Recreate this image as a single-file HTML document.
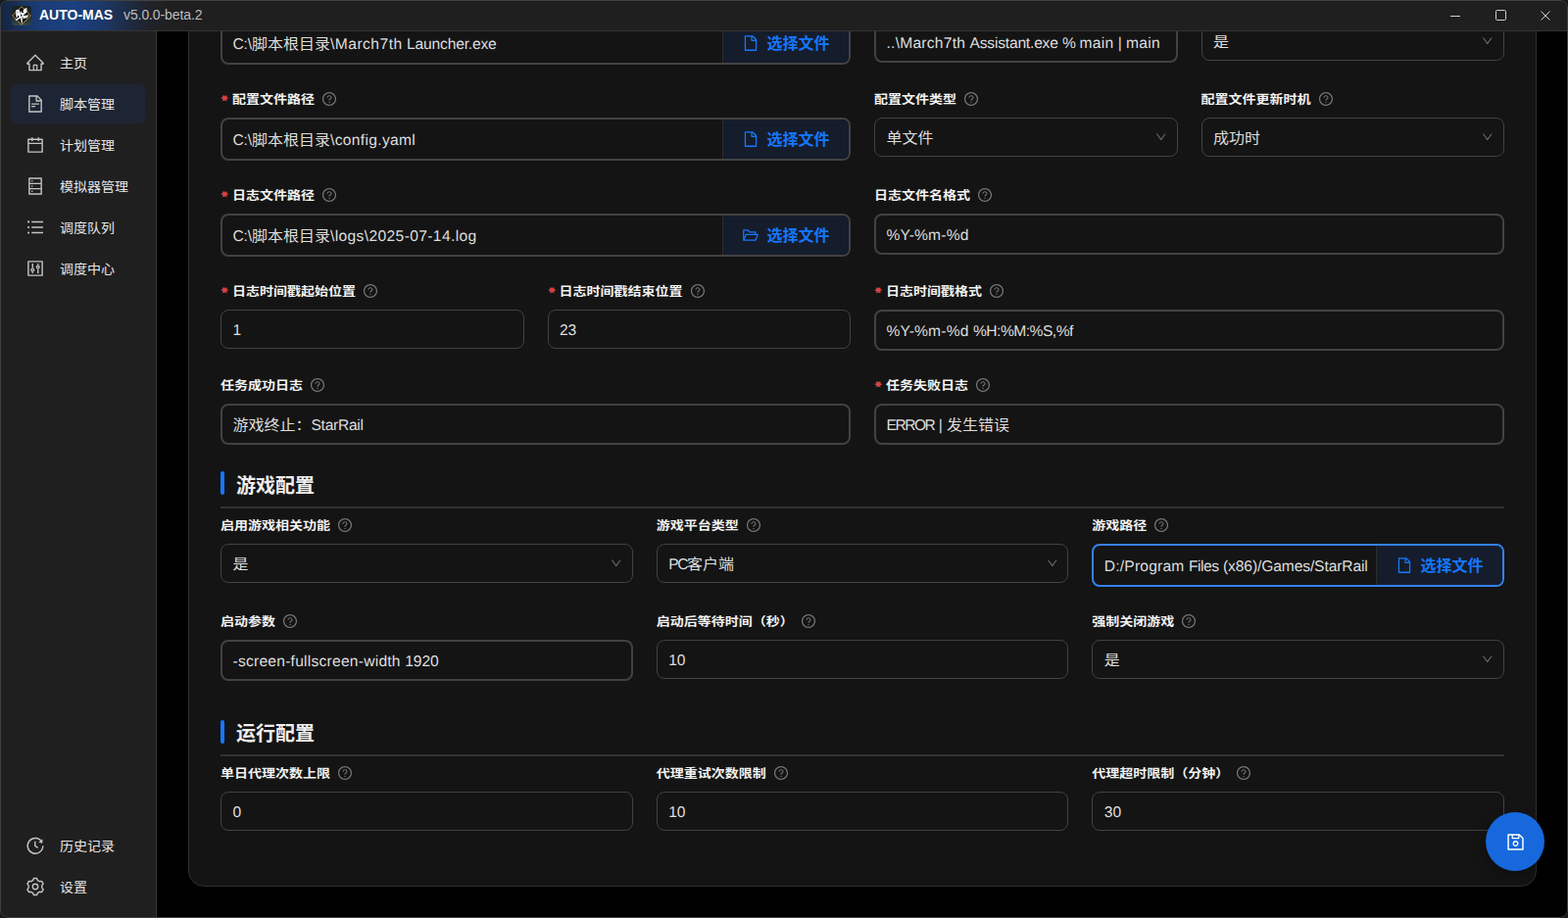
<!DOCTYPE html><html lang="zh-CN"><head><meta charset="utf-8"><title>AUTO-MAS</title><style>
*{box-sizing:border-box;margin:0;padding:0}
html,body{width:1600px;height:937px;overflow:hidden;background:#1b1b1b}
body{font-family:"Liberation Sans","Noto Sans CJK SC",sans-serif;font-size:14px;color:#e0e0e0;position:relative}
#win{position:absolute;left:0;top:0;width:1600px;height:937px;border-radius:8px;overflow:hidden;background:#000}
#frame{position:absolute;left:0;top:0;width:1600px;height:937px;border:1px solid #414141;border-radius:8px;z-index:50;pointer-events:none}
#tb{position:absolute;left:0;top:0;width:1600px;height:32px;background:#1f1f1f;border-bottom:1px solid #333;z-index:20}
#tb .grad{position:absolute;left:0;top:0;width:260px;height:31px;background:linear-gradient(90deg,#15233c 0px,#17294a 9px,#193564 24px,#1b3c76 42px,#1c4180 72px,#1c3a6e 100px,#1e2e4c 125px,#1f2329 152px,#1f1f1f 176px)}
#logo{position:absolute;left:12px;top:6px;width:20px;height:20px}
#tb .t1{position:absolute;left:40px;top:-1px;height:32px;line-height:32px;font-weight:700;font-size:14px;color:#fff;white-space:nowrap}
#tb .t2{position:absolute;left:126px;top:-1px;height:32px;line-height:32px;font-size:14px;letter-spacing:-0.1px;color:#bdbdbd;white-space:nowrap}
#tb .wc{position:absolute;top:0;height:32px}
#sb{position:absolute;left:0;top:32px;width:160px;height:905px;background:#1f1f1f;border-right:1px solid #393939;z-index:10}
.mi{position:absolute;left:11px;width:137px;height:40px;border-radius:6px;color:#e6e6e6;font-size:14px;line-height:40px;white-space:nowrap}
.mi.sel{background:#1d2534}
.mi .i{position:absolute;left:15px;top:10px;color:#c4c4c4}
.mi>span.t{position:absolute;left:50px;top:0}
#card{position:absolute;left:192px;top:-40px;width:1376px;height:945px;background:#141414;border:1px solid #303030;border-radius:0 0 16px 16px;z-index:1}
.c{display:inline-block;transform:translateY(.04em) scaleY(.91);transform-origin:50% 56%}
.l{font-size:.975em;text-rendering:geometricPrecision}
.lb .c{transform:translateY(.01em) scaleY(.865)}
.sec .c{transform:none}
.btn .c{transform:translateY(.021em) scaleY(.965)}
.lb{position:absolute;height:22px;line-height:22px;font-size:14px;font-weight:700;color:#f2f2f2;white-space:nowrap}
.lb .req{color:#dc4446;font-weight:700;font-family:"DejaVu Sans",sans-serif;font-size:13px;line-height:22px;margin-right:4px;display:inline-block;width:8px;height:22px;vertical-align:top;position:relative;top:0.7px;left:-0.7px;transform:rotate(90deg) scaleX(.8);transform-origin:3.4px 10.2px;-webkit-text-stroke:0.7px #dc4446}
.lb .i{color:#7a7a7a;vertical-align:-3px;margin-left:8px;position:relative;left:-1px}
.ctl{position:absolute;border:1px solid #424242;border-radius:8px;background:#141414;color:#dedede;font-size:16px;white-space:nowrap;overflow:hidden}
.ctl .v{position:absolute;left:11px;top:2px;white-space:pre}
.ctl.t2{border-width:2px}
.ctl.focus{border-color:#3481f0;border-width:2px}
.ctl .btn{position:absolute;right:0;top:0;bottom:0;width:129px;background:#151d2c;border-left:1px solid #2c2c2c;color:#1677ff;font-weight:700;font-size:16px}
.ctl .btn .i{position:absolute;left:19px;top:11px}
.ctl .btn>span.t{position:absolute;left:44.5px;top:1px}
.ctl .dn{position:absolute;right:10px;color:#6e6e6e}
.sec{position:absolute;left:225px;width:1310px;height:38px;border-bottom:2px solid #333}
.sec i{position:absolute;left:0;top:0;width:4px;height:24px;border-radius:2px;background:#1677ff}
.sec b{position:absolute;left:16px;top:0;font-size:20px;line-height:26px;color:#efefef;font-weight:700;white-space:nowrap}
#fab{position:absolute;left:1516px;top:829px;width:60px;height:60px;border-radius:50%;background:#1668dc;z-index:30;color:#fff;box-shadow:0 6px 16px rgba(0,0,0,.3)}
#fab .i{position:absolute;left:19.5px;top:19.5px}
</style></head><body>
<div id="win">
<div id="tb"><div class="grad"></div>
<svg id="logo" viewBox="0 0 20 20"><defs><linearGradient id="lg" x1="0" y1="0" x2="0" y2="1"><stop offset="0" stop-color="#182022"/><stop offset=".55" stop-color="#1f2a2b"/><stop offset="1" stop-color="#314a4c"/></linearGradient></defs><rect width="20" height="20" rx="3.6" fill="url(#lg)"/><path d="M10 .7L19.3 10 10 19.3.7 10z" fill="#0e1011" stroke="#bd9c4b" stroke-width=".95"/><g fill="#fbfbfb"><path d="M4 4.8Q5.6 3 7.6 4L8.9 7.4 9.2 11.6 7.5 12.2 7 9.7 5.9 9.9 5.7 12.1 4.4 11.4z"/><path d="M12.6 3L15.3 1.9 15.6 6 14 7.7 12.2 7.2 11.6 5.2z"/><path d="M9 5.2L11.2 7.6 13.4 5.6 14 7.6 11.4 10.3 9.2 8.4z"/><path d="M11.2 10.2L17.5 9.3 15.6 12.3 11.6 12.9z"/><path d="M3.5 13.7L11.4 9.8 12 11 4.6 15z"/><path d="M9 12.6L10.8 12 10.8 17.5 9.9 17.8z"/></g><circle cx="5.9" cy="6.7" r=".7" fill="#8a8a8a"/><circle cx="14.6" cy="10.8" r=".5" fill="#9a9a9a"/></svg>
<div class="t1">AUTO-MAS</div><div class="t2">v5.0.0-beta.2</div>
<svg class="wc" style="left:1462px" width="138" height="32" viewBox="0 0 138 32" fill="none" stroke="#d0d0d0" stroke-width="1"><path d="M18 16.5h10"/><rect x="64.5" y="10.5" width="10" height="10" rx="1.2"/><path d="M110.5 11.5l9 9M119.5 11.5l-9 9"/></svg>
</div>
<div id="sb">
<div class="mi" style="top:12px"><svg class="i" viewBox="0 0 1024 1024" width="20" height="20" fill="currentColor" style=""><path d="M946.5 505L560.1 118.8l-25.9-25.9a31.5 31.5 0 00-44.4 0L77.5 505a63.9 63.9 0 00-18.8 46c.4 35.2 29.7 63.3 64.9 63.3h42.5V940h691.8V614.3h43.4c17.1 0 33.2-6.7 45.3-18.8a63.6 63.6 0 0018.7-45.3c0-17-6.7-33.1-18.8-45.2zM568 868H456V664h112v204zm217.9-325.7V868H632V640c0-22.1-17.9-40-40-40H432c-22.1 0-40 17.9-40 40v228H238.1V542.3h-96l370-369.7 23.1 23.1L882 542.3h-96.1z"/></svg><span class="t"><span class="c">主页</span></span></div>
<div class="mi sel" style="top:54px"><svg class="i" viewBox="0 0 1024 1024" width="20" height="20" fill="currentColor" style=""><path d="M854.6 288.6L639.4 73.4c-6-6-14.1-9.4-22.6-9.4H192c-17.7 0-32 14.3-32 32v832c0 17.7 14.3 32 32 32h640c17.7 0 32-14.3 32-32V311.3c0-8.5-3.4-16.7-9.4-22.7zM790.2 326H602V137.8L790.2 326zm1.8 562H232V136h302v216a42 42 0 0042 42h216v494zM504 618H320c-4.4 0-8 3.6-8 8v48c0 4.4 3.6 8 8 8h184c4.4 0 8-3.6 8-8v-48c0-4.4-3.6-8-8-8zM312 490v48c0 4.4 3.6 8 8 8h384c4.4 0 8-3.6 8-8v-48c0-4.4-3.6-8-8-8H320c-4.4 0-8 3.6-8 8z"/></svg><span class="t"><span class="c">脚本管理</span></span></div>
<div class="mi" style="top:96px"><svg class="i" viewBox="0 0 1024 1024" width="20" height="20" fill="currentColor" style=""><path d="M880 184H712v-64c0-4.4-3.6-8-8-8h-56c-4.4 0-8 3.6-8 8v64H384v-64c0-4.4-3.6-8-8-8h-56c-4.4 0-8 3.6-8 8v64H144c-17.7 0-32 14.3-32 32v664c0 17.7 14.3 32 32 32h736c17.7 0 32-14.3 32-32V216c0-17.7-14.3-32-32-32zm-40 656H184V460h656v380zM184 392V256h128v48c0 4.4 3.6 8 8 8h56c4.4 0 8-3.6 8-8v-48h256v48c0 4.4 3.6 8 8 8h56c4.4 0 8-3.6 8-8v-48h128v136H184z"/></svg><span class="t"><span class="c">计划管理</span></span></div>
<div class="mi" style="top:138px"><svg class="i" viewBox="0 0 1024 1024" width="20" height="20" fill="currentColor" style=""><path d="M832 64H192c-17.7 0-32 14.3-32 32v832c0 17.7 14.3 32 32 32h640c17.7 0 32-14.3 32-32V96c0-17.7-14.3-32-32-32zm-600 72h560v208H232V136zm560 480H232V408h560v208zm0 272H232V680h560v208zM304 240a40 40 0 1080 0 40 40 0 10-80 0zm0 272a40 40 0 1080 0 40 40 0 10-80 0zm0 272a40 40 0 1080 0 40 40 0 10-80 0z"/></svg><span class="t"><span class="c">模拟器管理</span></span></div>
<div class="mi" style="top:180px"><svg class="i" viewBox="0 0 1024 1024" width="20" height="20" fill="currentColor" style=""><path d="M912 192H328c-4.4 0-8 3.6-8 8v56c0 4.4 3.6 8 8 8h584c4.4 0 8-3.6 8-8v-56c0-4.4-3.6-8-8-8zm0 284H328c-4.4 0-8 3.6-8 8v56c0 4.4 3.6 8 8 8h584c4.4 0 8-3.6 8-8v-56c0-4.4-3.6-8-8-8zm0 284H328c-4.4 0-8 3.6-8 8v56c0 4.4 3.6 8 8 8h584c4.4 0 8-3.6 8-8v-56c0-4.4-3.6-8-8-8zM104 228a56 56 0 10112 0 56 56 0 10-112 0zm0 284a56 56 0 10112 0 56 56 0 10-112 0zm0 284a56 56 0 10112 0 56 56 0 10-112 0z"/></svg><span class="t"><span class="c">调度队列</span></span></div>
<div class="mi" style="top:222px"><svg class="i" viewBox="0 0 1024 1024" width="20" height="20" fill="currentColor" style=""><g fill="none" stroke="currentColor" stroke-width="72"><rect x="148" y="148" width="728" height="728" rx="8"/><path d="M372 256v230M372 690v78M652 256v78M652 538v230"/><circle cx="372" cy="588" r="70"/><circle cx="652" cy="436" r="70"/></g></svg><span class="t"><span class="c">调度中心</span></span></div>
<div class="mi" style="top:811px"><svg class="i" viewBox="0 0 1024 1024" width="20" height="20" fill="currentColor" style=""><g fill="none" stroke="currentColor" stroke-width="72" stroke-linecap="butt"><path d="M852 320A400 400 0 1 0 912 530"/><path d="M500 300v232l150 100" stroke-linejoin="miter"/></g><path d="M900 180L880 400 680 340z"/></svg><span class="t"><span class="c">历史记录</span></span></div>
<div class="mi" style="top:853px"><svg class="i" viewBox="0 0 1024 1024" width="20" height="20" fill="currentColor" style=""><g fill="none" stroke="currentColor" stroke-width="72" stroke-linejoin="round"><path d="M429.6 79.8 L594.4 79.8 L637.4 185.2 L732.3 240.0 L845.1 224.5 L927.5 367.3 L857.7 457.2 L857.7 566.8 L927.5 656.7 L845.1 799.5 L732.3 784.0 L637.4 838.8 L594.4 944.2 L429.6 944.2 L386.6 838.8 L291.7 784.0 L178.9 799.5 L96.5 656.7 L166.3 566.8 L166.3 457.2 L96.5 367.3 L178.9 224.5 L291.7 240.0 L386.6 185.2Z"/><circle cx="512" cy="512" r="140"/></g></svg><span class="t"><span class="c">设置</span></span></div>
</div>
<div id="card"></div>
<div id="content" style="position:absolute;left:0;top:0;z-index:2">
<div class="ctl t2" style="left:225px;top:22px;width:643px;height:44px;line-height:40px"><span class="v" style="left:10.5px;top:1.3px"><span class="l" style="letter-spacing:-0.16px">C:\</span><span class="c">脚本根目录</span><span class="l" style="letter-spacing:0.48px;word-spacing:-0.43px">\March7th </span><span class="l" style="letter-spacing:-0.17px">Launcher.exe</span></span><div class="btn"><svg class="i" viewBox="0 0 1024 1024" width="18" height="18" fill="currentColor" style="top:11px"><path d="M854.6 288.6L639.4 73.4c-6-6-14.1-9.4-22.6-9.4H192c-17.7 0-32 14.3-32 32v832c0 17.7 14.3 32 32 32h640c17.7 0 32-14.3 32-32V311.3c0-8.5-3.4-16.7-9.4-22.7zM790.2 326H602V137.8L790.2 326zm1.8 562H232V136h302v216a42 42 0 0042 42h216v494z"/></svg><span class="t"><span class="c">选择文件</span></span></div></div>
<div class="ctl t2" style="left:892px;top:22px;width:309.5px;height:42px;line-height:38px"><span class="v" style="left:10.5px;top:1.3px"><span class="l" style="letter-spacing:0.24px;word-spacing:-0.19px">..\March7th </span><span class="l" style="letter-spacing:-0.20px;word-spacing:0.25px">Assistant.exe </span><span class="l" style="letter-spacing:-0.78px;word-spacing:0.83px">% </span><span class="l" style="letter-spacing:0.26px;word-spacing:-0.21px">main </span><span class="l" style="letter-spacing:-0.22px;word-spacing:0.27px">| </span><span class="l" style="letter-spacing:0.26px">main</span></span></div>
<div class="ctl" style="left:1225.5px;top:22px;width:309.5px;height:40px;line-height:38px"><span class="v" style="left:11.5px;top:1.3px"><span class="c">是</span></span><svg class="i dn" viewBox="0 0 1024 1024" width="13.5" height="13.5" fill="currentColor" style="position:absolute;right:9.25px;top:12.35px;color:#6a6a6a"><path d="M884 256h-75c-5.1 0-9.9 2.5-12.9 6.6L512 654.2 227.9 262.6c-3-4.1-7.8-6.6-12.9-6.6h-75c-6.5 0-10.3 7.4-6.5 12.7l352.6 486.1c12.8 17.6 39 17.6 51.7 0l352.6-486.1c3.9-5.3.1-12.7-6.4-12.7z"/></svg></div>
<div class="lb" style="left:225px;top:89.5px"><span class="req">*</span><span class="c">配置文件路径</span><svg class="i" viewBox="0 0 1024 1024" width="16" height="16" fill="currentColor" style="margin-left:8px"><path d="M512 64C264.6 64 64 264.6 64 512s200.6 448 448 448 448-200.6 448-448S759.4 64 512 64zm0 820c-205.4 0-372-166.6-372-372s166.6-372 372-372 372 166.6 372 372-166.6 372-372 372z"/><path d="M623.6 316.7C593.6 290.4 554 276 512 276s-81.6 14.5-111.6 40.7C369.2 344 352 380.7 352 420v7.6c0 4.4 3.6 8 8 8h48c4.4 0 8-3.6 8-8V420c0-44.1 43.1-80 96-80s96 35.9 96 80c0 31.1-22 59.6-56.1 72.7-21.2 8.1-39.2 22.3-52.1 40.9-13.1 19-19.9 41.8-19.9 64.9V620c0 4.4 3.6 8 8 8h48c4.4 0 8-3.6 8-8v-22.7a48.3 48.3 0 0130.9-44.8c59-22.7 97.1-74.7 97.1-132.5.1-39.3-17.1-76-48.3-103.3zM472 732a40 40 0 1080 0 40 40 0 10-80 0z"/></svg></div>
<div class="lb" style="left:892px;top:89.5px"><span class="c">配置文件类型</span><svg class="i" viewBox="0 0 1024 1024" width="16" height="16" fill="currentColor" style="margin-left:8px"><path d="M512 64C264.6 64 64 264.6 64 512s200.6 448 448 448 448-200.6 448-448S759.4 64 512 64zm0 820c-205.4 0-372-166.6-372-372s166.6-372 372-372 372 166.6 372 372-166.6 372-372 372z"/><path d="M623.6 316.7C593.6 290.4 554 276 512 276s-81.6 14.5-111.6 40.7C369.2 344 352 380.7 352 420v7.6c0 4.4 3.6 8 8 8h48c4.4 0 8-3.6 8-8V420c0-44.1 43.1-80 96-80s96 35.9 96 80c0 31.1-22 59.6-56.1 72.7-21.2 8.1-39.2 22.3-52.1 40.9-13.1 19-19.9 41.8-19.9 64.9V620c0 4.4 3.6 8 8 8h48c4.4 0 8-3.6 8-8v-22.7a48.3 48.3 0 0130.9-44.8c59-22.7 97.1-74.7 97.1-132.5.1-39.3-17.1-76-48.3-103.3zM472 732a40 40 0 1080 0 40 40 0 10-80 0z"/></svg></div>
<div class="lb" style="left:1225.5px;top:89.5px"><span class="c">配置文件更新时机</span><svg class="i" viewBox="0 0 1024 1024" width="16" height="16" fill="currentColor" style="margin-left:8px"><path d="M512 64C264.6 64 64 264.6 64 512s200.6 448 448 448 448-200.6 448-448S759.4 64 512 64zm0 820c-205.4 0-372-166.6-372-372s166.6-372 372-372 372 166.6 372 372-166.6 372-372 372z"/><path d="M623.6 316.7C593.6 290.4 554 276 512 276s-81.6 14.5-111.6 40.7C369.2 344 352 380.7 352 420v7.6c0 4.4 3.6 8 8 8h48c4.4 0 8-3.6 8-8V420c0-44.1 43.1-80 96-80s96 35.9 96 80c0 31.1-22 59.6-56.1 72.7-21.2 8.1-39.2 22.3-52.1 40.9-13.1 19-19.9 41.8-19.9 64.9V620c0 4.4 3.6 8 8 8h48c4.4 0 8-3.6 8-8v-22.7a48.3 48.3 0 0130.9-44.8c59-22.7 97.1-74.7 97.1-132.5.1-39.3-17.1-76-48.3-103.3zM472 732a40 40 0 1080 0 40 40 0 10-80 0z"/></svg></div>
<div class="ctl t2" style="left:225px;top:120px;width:643px;height:44px;line-height:40px"><span class="v" style="left:10.5px;top:1.3px"><span class="l" style="letter-spacing:-0.16px">C:\</span><span class="c">脚本根目录</span><span class="l" style="letter-spacing:0.33px">\config.yaml</span></span><div class="btn"><svg class="i" viewBox="0 0 1024 1024" width="18" height="18" fill="currentColor" style="top:11px"><path d="M854.6 288.6L639.4 73.4c-6-6-14.1-9.4-22.6-9.4H192c-17.7 0-32 14.3-32 32v832c0 17.7 14.3 32 32 32h640c17.7 0 32-14.3 32-32V311.3c0-8.5-3.4-16.7-9.4-22.7zM790.2 326H602V137.8L790.2 326zm1.8 562H232V136h302v216a42 42 0 0042 42h216v494z"/></svg><span class="t"><span class="c">选择文件</span></span></div></div>
<div class="ctl" style="left:892px;top:120px;width:309.5px;height:40px;line-height:38px"><span class="v" style="left:11.5px;top:1.3px"><span class="c">单文件</span></span><svg class="i dn" viewBox="0 0 1024 1024" width="13.5" height="13.5" fill="currentColor" style="position:absolute;right:9.25px;top:12.35px;color:#6a6a6a"><path d="M884 256h-75c-5.1 0-9.9 2.5-12.9 6.6L512 654.2 227.9 262.6c-3-4.1-7.8-6.6-12.9-6.6h-75c-6.5 0-10.3 7.4-6.5 12.7l352.6 486.1c12.8 17.6 39 17.6 51.7 0l352.6-486.1c3.9-5.3.1-12.7-6.4-12.7z"/></svg></div>
<div class="ctl" style="left:1225.5px;top:120px;width:309.5px;height:40px;line-height:38px"><span class="v" style="left:11.5px;top:1.3px"><span class="c">成功时</span></span><svg class="i dn" viewBox="0 0 1024 1024" width="13.5" height="13.5" fill="currentColor" style="position:absolute;right:9.25px;top:12.35px;color:#6a6a6a"><path d="M884 256h-75c-5.1 0-9.9 2.5-12.9 6.6L512 654.2 227.9 262.6c-3-4.1-7.8-6.6-12.9-6.6h-75c-6.5 0-10.3 7.4-6.5 12.7l352.6 486.1c12.8 17.6 39 17.6 51.7 0l352.6-486.1c3.9-5.3.1-12.7-6.4-12.7z"/></svg></div>
<div class="lb" style="left:225px;top:187.5px"><span class="req">*</span><span class="c">日志文件路径</span><svg class="i" viewBox="0 0 1024 1024" width="16" height="16" fill="currentColor" style="margin-left:8px"><path d="M512 64C264.6 64 64 264.6 64 512s200.6 448 448 448 448-200.6 448-448S759.4 64 512 64zm0 820c-205.4 0-372-166.6-372-372s166.6-372 372-372 372 166.6 372 372-166.6 372-372 372z"/><path d="M623.6 316.7C593.6 290.4 554 276 512 276s-81.6 14.5-111.6 40.7C369.2 344 352 380.7 352 420v7.6c0 4.4 3.6 8 8 8h48c4.4 0 8-3.6 8-8V420c0-44.1 43.1-80 96-80s96 35.9 96 80c0 31.1-22 59.6-56.1 72.7-21.2 8.1-39.2 22.3-52.1 40.9-13.1 19-19.9 41.8-19.9 64.9V620c0 4.4 3.6 8 8 8h48c4.4 0 8-3.6 8-8v-22.7a48.3 48.3 0 0130.9-44.8c59-22.7 97.1-74.7 97.1-132.5.1-39.3-17.1-76-48.3-103.3zM472 732a40 40 0 1080 0 40 40 0 10-80 0z"/></svg></div>
<div class="lb" style="left:892px;top:187.5px"><span class="c">日志文件名格式</span><svg class="i" viewBox="0 0 1024 1024" width="16" height="16" fill="currentColor" style="margin-left:8px"><path d="M512 64C264.6 64 64 264.6 64 512s200.6 448 448 448 448-200.6 448-448S759.4 64 512 64zm0 820c-205.4 0-372-166.6-372-372s166.6-372 372-372 372 166.6 372 372-166.6 372-372 372z"/><path d="M623.6 316.7C593.6 290.4 554 276 512 276s-81.6 14.5-111.6 40.7C369.2 344 352 380.7 352 420v7.6c0 4.4 3.6 8 8 8h48c4.4 0 8-3.6 8-8V420c0-44.1 43.1-80 96-80s96 35.9 96 80c0 31.1-22 59.6-56.1 72.7-21.2 8.1-39.2 22.3-52.1 40.9-13.1 19-19.9 41.8-19.9 64.9V620c0 4.4 3.6 8 8 8h48c4.4 0 8-3.6 8-8v-22.7a48.3 48.3 0 0130.9-44.8c59-22.7 97.1-74.7 97.1-132.5.1-39.3-17.1-76-48.3-103.3zM472 732a40 40 0 1080 0 40 40 0 10-80 0z"/></svg></div>
<div class="ctl t2" style="left:225px;top:218px;width:643px;height:44px;line-height:40px"><span class="v" style="left:10.5px;top:1.3px"><span class="l" style="letter-spacing:-0.16px">C:\</span><span class="c">脚本根目录</span><span class="l" style="letter-spacing:0.37px">\logs\2025-07-14.log</span></span><div class="btn"><svg class="i" viewBox="0 0 1024 1024" width="18" height="18" fill="currentColor" style="top:11px"><path d="M928 444H820V330.4c0-17.7-14.3-32-32-32H473L355.7 186.2a8.15 8.15 0 00-5.5-2.2H96c-17.7 0-32 14.3-32 32v592c0 17.7 14.3 32 32 32h698c13 0 24.8-7.9 29.7-20l134-332c1.5-3.8 2.3-7.9 2.3-12 0-17.7-14.3-32-32-32zM136 256h188.5l119.6 114.4H748V444H238c-13 0-24.8 7.9-29.7 20L136 643.2V256zm635.3 512H159l103.3-256h612.4L771.3 768z"/></svg><span class="t"><span class="c">选择文件</span></span></div></div>
<div class="ctl t2" style="left:892px;top:218px;width:643px;height:42px;line-height:38px"><span class="v" style="left:10.5px;top:1.3px"><span class="l" style="letter-spacing:0.18px">%Y-%m-%d</span></span></div>
<div class="lb" style="left:225px;top:285.5px"><span class="req">*</span><span class="c">日志时间戳起始位置</span><svg class="i" viewBox="0 0 1024 1024" width="16" height="16" fill="currentColor" style="margin-left:8px"><path d="M512 64C264.6 64 64 264.6 64 512s200.6 448 448 448 448-200.6 448-448S759.4 64 512 64zm0 820c-205.4 0-372-166.6-372-372s166.6-372 372-372 372 166.6 372 372-166.6 372-372 372z"/><path d="M623.6 316.7C593.6 290.4 554 276 512 276s-81.6 14.5-111.6 40.7C369.2 344 352 380.7 352 420v7.6c0 4.4 3.6 8 8 8h48c4.4 0 8-3.6 8-8V420c0-44.1 43.1-80 96-80s96 35.9 96 80c0 31.1-22 59.6-56.1 72.7-21.2 8.1-39.2 22.3-52.1 40.9-13.1 19-19.9 41.8-19.9 64.9V620c0 4.4 3.6 8 8 8h48c4.4 0 8-3.6 8-8v-22.7a48.3 48.3 0 0130.9-44.8c59-22.7 97.1-74.7 97.1-132.5.1-39.3-17.1-76-48.3-103.3zM472 732a40 40 0 1080 0 40 40 0 10-80 0z"/></svg></div>
<div class="lb" style="left:558.5px;top:285.5px"><span class="req">*</span><span class="c">日志时间戳结束位置</span><svg class="i" viewBox="0 0 1024 1024" width="16" height="16" fill="currentColor" style="margin-left:8px"><path d="M512 64C264.6 64 64 264.6 64 512s200.6 448 448 448 448-200.6 448-448S759.4 64 512 64zm0 820c-205.4 0-372-166.6-372-372s166.6-372 372-372 372 166.6 372 372-166.6 372-372 372z"/><path d="M623.6 316.7C593.6 290.4 554 276 512 276s-81.6 14.5-111.6 40.7C369.2 344 352 380.7 352 420v7.6c0 4.4 3.6 8 8 8h48c4.4 0 8-3.6 8-8V420c0-44.1 43.1-80 96-80s96 35.9 96 80c0 31.1-22 59.6-56.1 72.7-21.2 8.1-39.2 22.3-52.1 40.9-13.1 19-19.9 41.8-19.9 64.9V620c0 4.4 3.6 8 8 8h48c4.4 0 8-3.6 8-8v-22.7a48.3 48.3 0 0130.9-44.8c59-22.7 97.1-74.7 97.1-132.5.1-39.3-17.1-76-48.3-103.3zM472 732a40 40 0 1080 0 40 40 0 10-80 0z"/></svg></div>
<div class="lb" style="left:892px;top:285.5px"><span class="req">*</span><span class="c">日志时间戳格式</span><svg class="i" viewBox="0 0 1024 1024" width="16" height="16" fill="currentColor" style="margin-left:8px"><path d="M512 64C264.6 64 64 264.6 64 512s200.6 448 448 448 448-200.6 448-448S759.4 64 512 64zm0 820c-205.4 0-372-166.6-372-372s166.6-372 372-372 372 166.6 372 372-166.6 372-372 372z"/><path d="M623.6 316.7C593.6 290.4 554 276 512 276s-81.6 14.5-111.6 40.7C369.2 344 352 380.7 352 420v7.6c0 4.4 3.6 8 8 8h48c4.4 0 8-3.6 8-8V420c0-44.1 43.1-80 96-80s96 35.9 96 80c0 31.1-22 59.6-56.1 72.7-21.2 8.1-39.2 22.3-52.1 40.9-13.1 19-19.9 41.8-19.9 64.9V620c0 4.4 3.6 8 8 8h48c4.4 0 8-3.6 8-8v-22.7a48.3 48.3 0 0130.9-44.8c59-22.7 97.1-74.7 97.1-132.5.1-39.3-17.1-76-48.3-103.3zM472 732a40 40 0 1080 0 40 40 0 10-80 0z"/></svg></div>
<div class="ctl" style="left:225px;top:316px;width:309.5px;height:40px;line-height:38px"><span class="v" style="left:11.5px;top:1.3px"><span class="l" style="letter-spacing:-0.05px">1</span></span></div>
<div class="ctl" style="left:558.5px;top:316px;width:309.5px;height:40px;line-height:38px"><span class="v" style="left:11.5px;top:1.3px"><span class="l" style="letter-spacing:-0.05px">23</span></span></div>
<div class="ctl t2" style="left:892px;top:316px;width:643px;height:42px;line-height:38px"><span class="v" style="left:10.5px;top:1.3px"><span class="l" style="letter-spacing:0.18px;word-spacing:-0.13px">%Y-%m-%d </span><span class="l" style="letter-spacing:-0.50px">%H:%M:%S,%f</span></span></div>
<div class="lb" style="left:225px;top:381.5px"><span class="c">任务成功日志</span><svg class="i" viewBox="0 0 1024 1024" width="16" height="16" fill="currentColor" style="margin-left:8px"><path d="M512 64C264.6 64 64 264.6 64 512s200.6 448 448 448 448-200.6 448-448S759.4 64 512 64zm0 820c-205.4 0-372-166.6-372-372s166.6-372 372-372 372 166.6 372 372-166.6 372-372 372z"/><path d="M623.6 316.7C593.6 290.4 554 276 512 276s-81.6 14.5-111.6 40.7C369.2 344 352 380.7 352 420v7.6c0 4.4 3.6 8 8 8h48c4.4 0 8-3.6 8-8V420c0-44.1 43.1-80 96-80s96 35.9 96 80c0 31.1-22 59.6-56.1 72.7-21.2 8.1-39.2 22.3-52.1 40.9-13.1 19-19.9 41.8-19.9 64.9V620c0 4.4 3.6 8 8 8h48c4.4 0 8-3.6 8-8v-22.7a48.3 48.3 0 0130.9-44.8c59-22.7 97.1-74.7 97.1-132.5.1-39.3-17.1-76-48.3-103.3zM472 732a40 40 0 1080 0 40 40 0 10-80 0z"/></svg></div>
<div class="lb" style="left:892px;top:381.5px"><span class="req">*</span><span class="c">任务失败日志</span><svg class="i" viewBox="0 0 1024 1024" width="16" height="16" fill="currentColor" style="margin-left:8px"><path d="M512 64C264.6 64 64 264.6 64 512s200.6 448 448 448 448-200.6 448-448S759.4 64 512 64zm0 820c-205.4 0-372-166.6-372-372s166.6-372 372-372 372 166.6 372 372-166.6 372-372 372z"/><path d="M623.6 316.7C593.6 290.4 554 276 512 276s-81.6 14.5-111.6 40.7C369.2 344 352 380.7 352 420v7.6c0 4.4 3.6 8 8 8h48c4.4 0 8-3.6 8-8V420c0-44.1 43.1-80 96-80s96 35.9 96 80c0 31.1-22 59.6-56.1 72.7-21.2 8.1-39.2 22.3-52.1 40.9-13.1 19-19.9 41.8-19.9 64.9V620c0 4.4 3.6 8 8 8h48c4.4 0 8-3.6 8-8v-22.7a48.3 48.3 0 0130.9-44.8c59-22.7 97.1-74.7 97.1-132.5.1-39.3-17.1-76-48.3-103.3zM472 732a40 40 0 1080 0 40 40 0 10-80 0z"/></svg></div>
<div class="ctl t2" style="left:225px;top:412px;width:643px;height:42px;line-height:38px"><span class="v" style="left:10.5px;top:1.3px"><span class="c">游戏终止：</span><span class="l" style="letter-spacing:-0.30px">StarRail</span></span></div>
<div class="ctl t2" style="left:892px;top:412px;width:643px;height:42px;line-height:38px"><span class="v" style="left:10.5px;top:1.3px"><span class="l" style="letter-spacing:-1.49px;word-spacing:1.54px">ERROR </span><span class="l" style="letter-spacing:-0.22px;word-spacing:0.27px">| </span><span class="c">发生错误</span></span></div>
<div class="sec" style="top:481px;height:38px"><i></i><b style="top:2px"><span class="c">游戏配置</span></b></div>
<div class="lb" style="left:225px;top:524.5px"><span class="c">启用游戏相关功能</span><svg class="i" viewBox="0 0 1024 1024" width="16" height="16" fill="currentColor" style="margin-left:8px"><path d="M512 64C264.6 64 64 264.6 64 512s200.6 448 448 448 448-200.6 448-448S759.4 64 512 64zm0 820c-205.4 0-372-166.6-372-372s166.6-372 372-372 372 166.6 372 372-166.6 372-372 372z"/><path d="M623.6 316.7C593.6 290.4 554 276 512 276s-81.6 14.5-111.6 40.7C369.2 344 352 380.7 352 420v7.6c0 4.4 3.6 8 8 8h48c4.4 0 8-3.6 8-8V420c0-44.1 43.1-80 96-80s96 35.9 96 80c0 31.1-22 59.6-56.1 72.7-21.2 8.1-39.2 22.3-52.1 40.9-13.1 19-19.9 41.8-19.9 64.9V620c0 4.4 3.6 8 8 8h48c4.4 0 8-3.6 8-8v-22.7a48.3 48.3 0 0130.9-44.8c59-22.7 97.1-74.7 97.1-132.5.1-39.3-17.1-76-48.3-103.3zM472 732a40 40 0 1080 0 40 40 0 10-80 0z"/></svg></div>
<div class="lb" style="left:669.67px;top:524.5px"><span class="c">游戏平台类型</span><svg class="i" viewBox="0 0 1024 1024" width="16" height="16" fill="currentColor" style="margin-left:8px"><path d="M512 64C264.6 64 64 264.6 64 512s200.6 448 448 448 448-200.6 448-448S759.4 64 512 64zm0 820c-205.4 0-372-166.6-372-372s166.6-372 372-372 372 166.6 372 372-166.6 372-372 372z"/><path d="M623.6 316.7C593.6 290.4 554 276 512 276s-81.6 14.5-111.6 40.7C369.2 344 352 380.7 352 420v7.6c0 4.4 3.6 8 8 8h48c4.4 0 8-3.6 8-8V420c0-44.1 43.1-80 96-80s96 35.9 96 80c0 31.1-22 59.6-56.1 72.7-21.2 8.1-39.2 22.3-52.1 40.9-13.1 19-19.9 41.8-19.9 64.9V620c0 4.4 3.6 8 8 8h48c4.4 0 8-3.6 8-8v-22.7a48.3 48.3 0 0130.9-44.8c59-22.7 97.1-74.7 97.1-132.5.1-39.3-17.1-76-48.3-103.3zM472 732a40 40 0 1080 0 40 40 0 10-80 0z"/></svg></div>
<div class="lb" style="left:1114.33px;top:524.5px"><span class="c">游戏路径</span><svg class="i" viewBox="0 0 1024 1024" width="16" height="16" fill="currentColor" style="margin-left:8px"><path d="M512 64C264.6 64 64 264.6 64 512s200.6 448 448 448 448-200.6 448-448S759.4 64 512 64zm0 820c-205.4 0-372-166.6-372-372s166.6-372 372-372 372 166.6 372 372-166.6 372-372 372z"/><path d="M623.6 316.7C593.6 290.4 554 276 512 276s-81.6 14.5-111.6 40.7C369.2 344 352 380.7 352 420v7.6c0 4.4 3.6 8 8 8h48c4.4 0 8-3.6 8-8V420c0-44.1 43.1-80 96-80s96 35.9 96 80c0 31.1-22 59.6-56.1 72.7-21.2 8.1-39.2 22.3-52.1 40.9-13.1 19-19.9 41.8-19.9 64.9V620c0 4.4 3.6 8 8 8h48c4.4 0 8-3.6 8-8v-22.7a48.3 48.3 0 0130.9-44.8c59-22.7 97.1-74.7 97.1-132.5.1-39.3-17.1-76-48.3-103.3zM472 732a40 40 0 1080 0 40 40 0 10-80 0z"/></svg></div>
<div class="ctl" style="left:225px;top:555px;width:420.67px;height:40px;line-height:38px"><span class="v" style="left:11.5px;top:1.3px"><span class="c">是</span></span><svg class="i dn" viewBox="0 0 1024 1024" width="13.5" height="13.5" fill="currentColor" style="position:absolute;right:9.25px;top:12.35px;color:#6a6a6a"><path d="M884 256h-75c-5.1 0-9.9 2.5-12.9 6.6L512 654.2 227.9 262.6c-3-4.1-7.8-6.6-12.9-6.6h-75c-6.5 0-10.3 7.4-6.5 12.7l352.6 486.1c12.8 17.6 39 17.6 51.7 0l352.6-486.1c3.9-5.3.1-12.7-6.4-12.7z"/></svg></div>
<div class="ctl" style="left:669.67px;top:555px;width:420.67px;height:40px;line-height:38px"><span class="v" style="left:11.5px;top:1.3px"><span class="l" style="letter-spacing:-1.40px">PC</span><span class="c">客户端</span></span><svg class="i dn" viewBox="0 0 1024 1024" width="13.5" height="13.5" fill="currentColor" style="position:absolute;right:9.25px;top:12.35px;color:#6a6a6a"><path d="M884 256h-75c-5.1 0-9.9 2.5-12.9 6.6L512 654.2 227.9 262.6c-3-4.1-7.8-6.6-12.9-6.6h-75c-6.5 0-10.3 7.4-6.5 12.7l352.6 486.1c12.8 17.6 39 17.6 51.7 0l352.6-486.1c3.9-5.3.1-12.7-6.4-12.7z"/></svg></div>
<div class="ctl t2 focus" style="left:1114.33px;top:555px;width:420.67px;height:44px;line-height:40px"><span class="v" style="left:10.5px;top:1.3px"><span class="l" style="letter-spacing:0.20px;word-spacing:-0.15px">D:/Program </span><span class="l" style="letter-spacing:-0.45px;word-spacing:0.49px">Files </span><span class="l" style="letter-spacing:-0.11px">(x86)/Games/StarRail</span></span><div class="btn"><svg class="i" viewBox="0 0 1024 1024" width="18" height="18" fill="currentColor" style="top:11px"><path d="M854.6 288.6L639.4 73.4c-6-6-14.1-9.4-22.6-9.4H192c-17.7 0-32 14.3-32 32v832c0 17.7 14.3 32 32 32h640c17.7 0 32-14.3 32-32V311.3c0-8.5-3.4-16.7-9.4-22.7zM790.2 326H602V137.8L790.2 326zm1.8 562H232V136h302v216a42 42 0 0042 42h216v494z"/></svg><span class="t"><span class="c">选择文件</span></span></div></div>
<div class="lb" style="left:225px;top:622.5px"><span class="c">启动参数</span><svg class="i" viewBox="0 0 1024 1024" width="16" height="16" fill="currentColor" style="margin-left:8px"><path d="M512 64C264.6 64 64 264.6 64 512s200.6 448 448 448 448-200.6 448-448S759.4 64 512 64zm0 820c-205.4 0-372-166.6-372-372s166.6-372 372-372 372 166.6 372 372-166.6 372-372 372z"/><path d="M623.6 316.7C593.6 290.4 554 276 512 276s-81.6 14.5-111.6 40.7C369.2 344 352 380.7 352 420v7.6c0 4.4 3.6 8 8 8h48c4.4 0 8-3.6 8-8V420c0-44.1 43.1-80 96-80s96 35.9 96 80c0 31.1-22 59.6-56.1 72.7-21.2 8.1-39.2 22.3-52.1 40.9-13.1 19-19.9 41.8-19.9 64.9V620c0 4.4 3.6 8 8 8h48c4.4 0 8-3.6 8-8v-22.7a48.3 48.3 0 0130.9-44.8c59-22.7 97.1-74.7 97.1-132.5.1-39.3-17.1-76-48.3-103.3zM472 732a40 40 0 1080 0 40 40 0 10-80 0z"/></svg></div>
<div class="lb" style="left:669.67px;top:622.5px"><span class="c">启动后等待时间（秒）</span><svg class="i" viewBox="0 0 1024 1024" width="16" height="16" fill="currentColor" style="margin-left:8px"><path d="M512 64C264.6 64 64 264.6 64 512s200.6 448 448 448 448-200.6 448-448S759.4 64 512 64zm0 820c-205.4 0-372-166.6-372-372s166.6-372 372-372 372 166.6 372 372-166.6 372-372 372z"/><path d="M623.6 316.7C593.6 290.4 554 276 512 276s-81.6 14.5-111.6 40.7C369.2 344 352 380.7 352 420v7.6c0 4.4 3.6 8 8 8h48c4.4 0 8-3.6 8-8V420c0-44.1 43.1-80 96-80s96 35.9 96 80c0 31.1-22 59.6-56.1 72.7-21.2 8.1-39.2 22.3-52.1 40.9-13.1 19-19.9 41.8-19.9 64.9V620c0 4.4 3.6 8 8 8h48c4.4 0 8-3.6 8-8v-22.7a48.3 48.3 0 0130.9-44.8c59-22.7 97.1-74.7 97.1-132.5.1-39.3-17.1-76-48.3-103.3zM472 732a40 40 0 1080 0 40 40 0 10-80 0z"/></svg></div>
<div class="lb" style="left:1114.33px;top:622.5px"><span class="c">强制关闭游戏</span><svg class="i" viewBox="0 0 1024 1024" width="16" height="16" fill="currentColor" style="margin-left:8px"><path d="M512 64C264.6 64 64 264.6 64 512s200.6 448 448 448 448-200.6 448-448S759.4 64 512 64zm0 820c-205.4 0-372-166.6-372-372s166.6-372 372-372 372 166.6 372 372-166.6 372-372 372z"/><path d="M623.6 316.7C593.6 290.4 554 276 512 276s-81.6 14.5-111.6 40.7C369.2 344 352 380.7 352 420v7.6c0 4.4 3.6 8 8 8h48c4.4 0 8-3.6 8-8V420c0-44.1 43.1-80 96-80s96 35.9 96 80c0 31.1-22 59.6-56.1 72.7-21.2 8.1-39.2 22.3-52.1 40.9-13.1 19-19.9 41.8-19.9 64.9V620c0 4.4 3.6 8 8 8h48c4.4 0 8-3.6 8-8v-22.7a48.3 48.3 0 0130.9-44.8c59-22.7 97.1-74.7 97.1-132.5.1-39.3-17.1-76-48.3-103.3zM472 732a40 40 0 1080 0 40 40 0 10-80 0z"/></svg></div>
<div class="ctl t2" style="left:225px;top:653px;width:420.67px;height:42px;line-height:38px"><span class="v" style="left:10.5px;top:1.3px"><span class="l" style="letter-spacing:0.24px;word-spacing:-0.19px">-screen-fullscreen-width </span><span class="l" style="letter-spacing:-0.05px">1920</span></span></div>
<div class="ctl" style="left:669.67px;top:653px;width:420.67px;height:40px;line-height:38px"><span class="v" style="left:11.5px;top:1.3px"><span class="l" style="letter-spacing:-0.05px">10</span></span></div>
<div class="ctl" style="left:1114.33px;top:653px;width:420.67px;height:40px;line-height:38px"><span class="v" style="left:11.5px;top:1.3px"><span class="c">是</span></span><svg class="i dn" viewBox="0 0 1024 1024" width="13.5" height="13.5" fill="currentColor" style="position:absolute;right:9.25px;top:12.35px;color:#6a6a6a"><path d="M884 256h-75c-5.1 0-9.9 2.5-12.9 6.6L512 654.2 227.9 262.6c-3-4.1-7.8-6.6-12.9-6.6h-75c-6.5 0-10.3 7.4-6.5 12.7l352.6 486.1c12.8 17.6 39 17.6 51.7 0l352.6-486.1c3.9-5.3.1-12.7-6.4-12.7z"/></svg></div>
<div class="sec" style="top:735px;height:37px"><i></i><b style="top:1px"><span class="c">运行配置</span></b></div>
<div class="lb" style="left:225px;top:777.5px"><span class="c">单日代理次数上限</span><svg class="i" viewBox="0 0 1024 1024" width="16" height="16" fill="currentColor" style="margin-left:8px"><path d="M512 64C264.6 64 64 264.6 64 512s200.6 448 448 448 448-200.6 448-448S759.4 64 512 64zm0 820c-205.4 0-372-166.6-372-372s166.6-372 372-372 372 166.6 372 372-166.6 372-372 372z"/><path d="M623.6 316.7C593.6 290.4 554 276 512 276s-81.6 14.5-111.6 40.7C369.2 344 352 380.7 352 420v7.6c0 4.4 3.6 8 8 8h48c4.4 0 8-3.6 8-8V420c0-44.1 43.1-80 96-80s96 35.9 96 80c0 31.1-22 59.6-56.1 72.7-21.2 8.1-39.2 22.3-52.1 40.9-13.1 19-19.9 41.8-19.9 64.9V620c0 4.4 3.6 8 8 8h48c4.4 0 8-3.6 8-8v-22.7a48.3 48.3 0 0130.9-44.8c59-22.7 97.1-74.7 97.1-132.5.1-39.3-17.1-76-48.3-103.3zM472 732a40 40 0 1080 0 40 40 0 10-80 0z"/></svg></div>
<div class="lb" style="left:669.67px;top:777.5px"><span class="c">代理重试次数限制</span><svg class="i" viewBox="0 0 1024 1024" width="16" height="16" fill="currentColor" style="margin-left:8px"><path d="M512 64C264.6 64 64 264.6 64 512s200.6 448 448 448 448-200.6 448-448S759.4 64 512 64zm0 820c-205.4 0-372-166.6-372-372s166.6-372 372-372 372 166.6 372 372-166.6 372-372 372z"/><path d="M623.6 316.7C593.6 290.4 554 276 512 276s-81.6 14.5-111.6 40.7C369.2 344 352 380.7 352 420v7.6c0 4.4 3.6 8 8 8h48c4.4 0 8-3.6 8-8V420c0-44.1 43.1-80 96-80s96 35.9 96 80c0 31.1-22 59.6-56.1 72.7-21.2 8.1-39.2 22.3-52.1 40.9-13.1 19-19.9 41.8-19.9 64.9V620c0 4.4 3.6 8 8 8h48c4.4 0 8-3.6 8-8v-22.7a48.3 48.3 0 0130.9-44.8c59-22.7 97.1-74.7 97.1-132.5.1-39.3-17.1-76-48.3-103.3zM472 732a40 40 0 1080 0 40 40 0 10-80 0z"/></svg></div>
<div class="lb" style="left:1114.33px;top:777.5px"><span class="c">代理超时限制（分钟）</span><svg class="i" viewBox="0 0 1024 1024" width="16" height="16" fill="currentColor" style="margin-left:8px"><path d="M512 64C264.6 64 64 264.6 64 512s200.6 448 448 448 448-200.6 448-448S759.4 64 512 64zm0 820c-205.4 0-372-166.6-372-372s166.6-372 372-372 372 166.6 372 372-166.6 372-372 372z"/><path d="M623.6 316.7C593.6 290.4 554 276 512 276s-81.6 14.5-111.6 40.7C369.2 344 352 380.7 352 420v7.6c0 4.4 3.6 8 8 8h48c4.4 0 8-3.6 8-8V420c0-44.1 43.1-80 96-80s96 35.9 96 80c0 31.1-22 59.6-56.1 72.7-21.2 8.1-39.2 22.3-52.1 40.9-13.1 19-19.9 41.8-19.9 64.9V620c0 4.4 3.6 8 8 8h48c4.4 0 8-3.6 8-8v-22.7a48.3 48.3 0 0130.9-44.8c59-22.7 97.1-74.7 97.1-132.5.1-39.3-17.1-76-48.3-103.3zM472 732a40 40 0 1080 0 40 40 0 10-80 0z"/></svg></div>
<div class="ctl" style="left:225px;top:808px;width:420.67px;height:40px;line-height:38px"><span class="v" style="left:11.5px;top:1.3px"><span class="l" style="letter-spacing:-0.05px">0</span></span></div>
<div class="ctl" style="left:669.67px;top:808px;width:420.67px;height:40px;line-height:38px"><span class="v" style="left:11.5px;top:1.3px"><span class="l" style="letter-spacing:-0.05px">10</span></span></div>
<div class="ctl" style="left:1114.33px;top:808px;width:420.67px;height:40px;line-height:38px"><span class="v" style="left:11.5px;top:1.3px"><span class="l" style="letter-spacing:-0.05px">30</span></span></div>
</div>
<div id="fab"><svg class="i" viewBox="0 0 1024 1024" width="21" height="21" fill="currentColor" style=""><path d="M893.3 293.3L730.7 130.7c-7.5-7.5-16.7-13-26.7-16V112H144c-17.7 0-32 14.3-32 32v736c0 17.7 14.3 32 32 32h736c17.7 0 32-14.3 32-32V338.5c0-17-6.7-33.2-18.7-45.2zM384 184h256v104H384V184zm456 656H184V184h136v136c0 17.7 14.3 32 32 32h320c17.7 0 32-14.3 32-32V205.8l136 136V840zM512 442c-79.5 0-144 64.5-144 144s64.5 144 144 144 144-64.5 144-144-64.5-144-144-144zm0 224c-44.2 0-80-35.8-80-80s35.8-80 80-80 80 35.8 80 80-35.8 80-80 80z"/></svg></div>
<div id="frame"></div>
</div></body></html>
